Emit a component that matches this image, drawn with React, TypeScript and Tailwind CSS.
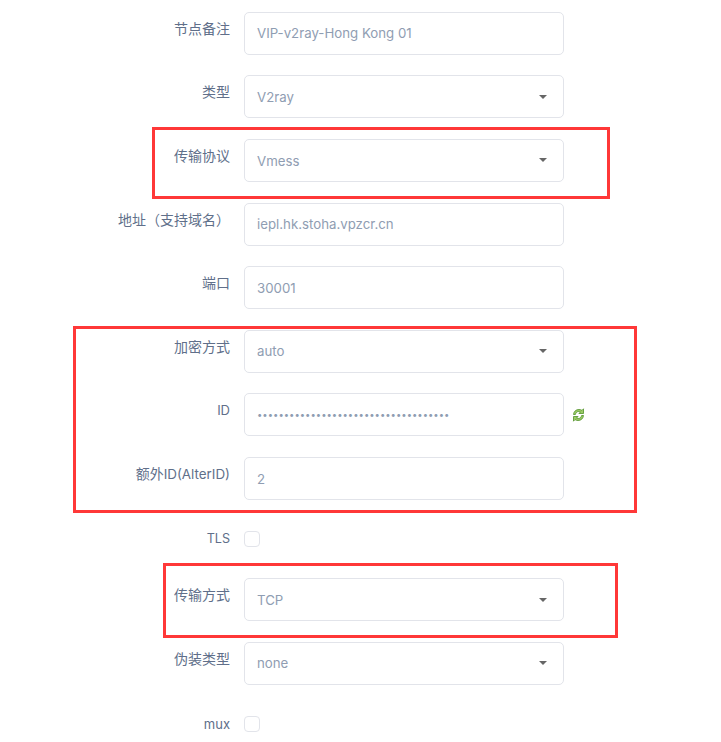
import React from "react";

const fieldFont = "font-['Inter','Noto_Sans_CJK_SC',sans-serif]";

function Latin({ children, wide, narrow }: { children: React.ReactNode; wide?: boolean; narrow?: boolean }) {
  return <span className={wide ? "text-[13.4px]" : narrow ? "text-[12.6px]" : "text-[13px]"}>{children}</span>;
}

function Label({ text, raised = true }: { text: React.ReactNode; raised?: boolean }) {
  return (
    <div className={`w-[230px] shrink-0 text-right text-[14px] leading-[22px] text-[#606f8a] ${raised ? "pt-[6px]" : ""}`}>
      {text}
    </div>
  );
}

function Field({ label, value, select, after, dots }: { label: React.ReactNode; value: string; select?: boolean; after?: React.ReactNode; dots?: boolean }) {
  return (
    <div className="mb-[20.6px] flex h-[43px] items-start">
      <Label text={label} />
      <div className="ml-[14px] flex h-[43px] w-[320px] shrink-0 items-center justify-between rounded-[5px] border-[1.5px] border-[#e2e4ea] bg-white pl-[12px] pr-[16px] text-[13.25px] text-[#8f9db2]">
        <span className={dots ? "text-[9.5px]" : "pt-[2px]"}>{value}</span>
        {select && <span className="h-0 w-0 border-x-[4px] border-t-[4px] border-x-transparent border-t-[#666666]" />}
      </div>
      {after}
    </div>
  );
}

function Check({ label }: { label: React.ReactNode }) {
  return (
    <div className="mb-[21px] flex h-[36.6px] items-center">
      <Label text={label} raised={false} />
      <span className="ml-[14px] h-4 w-4 rounded-[4px] border-[1.5px] border-[#e2e4ea] bg-white" />
    </div>
  );
}

function RefreshIcon() {
  return (
    <svg className="ml-[8px] mt-[15px]" width="13" height="14" viewBox="0 0 13 14" fill="none">
      <path d="M1.5 6.5C1.8 3.4 4 1.5 7 1.5c1.2 0 2.2.3 3 .9L11.5.8v4.7H6.9l1.6-1.6C7.9 3.6 7.4 3.5 6.8 3.5 5 3.5 3.8 4.7 3.4 6.5z" fill="#9ccc65" stroke="#4f9028" strokeWidth="0.8" />
      <path d="M11.5 7.5c-.3 3.1-2.5 5-5.5 5-1.2 0-2.2-.3-3-.9l-1.5 1.6V8.5h4.6l-1.6 1.6c.6.3 1.1.4 1.7.4 1.8 0 3-1.2 3.4-3z" fill="#9ccc65" stroke="#4f9028" strokeWidth="0.8" />
    </svg>
  );
}

function Mark({ className }: { className: string }) {
  return <div className={`pointer-events-none absolute border-[3px] border-[#ff3838] ${className}`} />;
}

export default function App() {
  return (
    <div className={`relative h-[742px] w-[721px] overflow-hidden bg-white pt-[11.8px] ${fieldFont}`}>
      <Field label="节点备注" value="VIP-v2ray-Hong Kong 01" />
      <Field label="类型" value="V2ray" select />
      <Field label="传输协议" value="Vmess" select />
      <Field label="地址（支持域名）" value="iepl.hk.stoha.vpzcr.cn" />
      <Field label="端口" value="30001" />
      <Field label="加密方式" value="auto" select />
      <Field label={<Latin>ID</Latin>} value={"•".repeat(36)} dots after={<RefreshIcon />} />
      <Field label={<>额外<Latin wide>ID(AlterID)</Latin></>} value="2" />
      <Check label={<Latin narrow>TLS</Latin>} />
      <Field label="传输方式" value="TCP" select />
      <Field label="伪装类型" value="none" select />
      <Check label={<Latin>mux</Latin>} />
      <Mark className="left-[152px] top-[127px] h-[72px] w-[458px]" />
      <Mark className="left-[73px] top-[326px] h-[187px] w-[564px]" />
      <Mark className="left-[163px] top-[563px] h-[75px] w-[455px]" />
    </div>
  );
}
